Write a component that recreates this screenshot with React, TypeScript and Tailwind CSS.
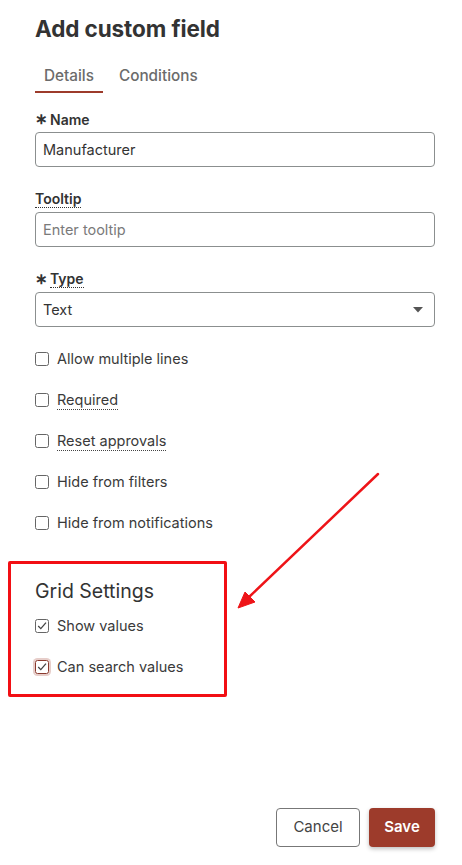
import React from "react";

function Box({ checked, focus }: { checked?: boolean; focus?: boolean }) {
  return (
    <span
      className={
        "relative flex h-[14px] w-[14px] shrink-0 items-center justify-center rounded-[2.5px] border-[1.5px] " +
        (focus
          ? "border-[#8a3a2e] shadow-[0_0_0_2px_rgba(158,58,42,0.25)]"
          : "border-[#666]")
      }
    >
      {checked && (
        <svg width="12" height="12" viewBox="0 0 12 12" className="absolute">
          <path d="M2.2 6 L4.8 8.6 L10 2.6" fill="none" stroke="#444" strokeWidth="1.3" />
        </svg>
      )}
    </span>
  );
}

function Row({ label, dotted, checked, focus }: { label: string; dotted?: boolean; checked?: boolean; focus?: boolean }) {
  return (
    <div className="flex h-[20px] items-center gap-[8px]">
      <Box checked={checked} focus={focus} />
      <span className={"text-[14.5px] leading-[18px] text-[#3a3a3a] " + (dotted ? "border-b border-dotted border-[#444]" : "")}>
        {label}
      </span>
    </div>
  );
}

export default function App() {
  return (
    <div
      className="relative flex h-[865px] w-[462px] flex-col bg-white text-[#333]"
      style={{ fontFamily: "Inter, 'Noto Sans', sans-serif" }}
    >
      <div className="flex flex-col pl-[35px] pr-[27px] pt-[14px]">
        <h1 className="text-[22.5px] font-bold leading-[30px] tracking-[-0.1px] text-[#333]">Add custom field</h1>
        <div className="mt-[18px] flex gap-[8px]">
          <div className="border-b-2 border-[#9d3b2b] px-[9px] pt-[4px] pb-[5px] text-[15.3px] font-medium leading-[20px] text-[#6b6b6b]">
            Details
          </div>
          <div className="px-[8px] pt-[4px] pb-[5px] text-[15.3px] font-medium leading-[20px] text-[#6b6b6b]">
            Conditions
          </div>
        </div>

        <div className="mt-[16px] flex h-[20px] items-center text-[14px] font-semibold text-[#333]">
          <span className="mr-[2px] text-[15px]">∗</span>Name
        </div>
        <div className="mt-[3px] flex h-[35px] items-center rounded-[4px] border border-[#8b8f8f] px-[7px] text-[14.5px] text-[#333]">
          Manufacturer
        </div>

        <div className="mt-[22px] flex h-[20px] items-center text-[14px] font-semibold text-[#333]">
          <span className="border-b border-dotted border-[#333] leading-[17px]">Tooltip</span>
        </div>
        <div className="mt-[3px] flex h-[35px] items-center rounded-[4px] border border-[#8b8f8f] px-[7px] text-[14.5px] text-[#7a7a7a]">
          Enter tooltip
        </div>

        <div className="mt-[22px] flex h-[20px] items-center text-[14px] font-semibold text-[#333]">
          <span className="mr-[2px] text-[15px]">∗</span>
          <span className="border-b border-dotted border-[#333] leading-[17px]">Type</span>
        </div>
        <div className="mt-[3px] flex h-[35px] items-center justify-between rounded-[4px] border border-[#8b8f8f] pl-[7px] pr-[11px] text-[14.5px] text-[#333]">
          <span>Text</span>
          <svg width="10" height="6" viewBox="0 0 10 6">
            <path d="M0 0 L10 0 L5 5.5 Z" fill="#555" />
          </svg>
        </div>

        <div className="mt-[22px] flex flex-col gap-[21px]">
          <Row label="Allow multiple lines" />
          <Row label="Required" dotted />
          <Row label="Reset approvals" dotted />
          <Row label="Hide from filters" />
          <Row label="Hide from notifications" />
        </div>

        <div className="mt-[45px] text-[19.5px] leading-[26px] text-[#333]">Grid Settings</div>
        <div className="mt-[12px] flex flex-col gap-[21px]">
          <Row label="Show values" checked />
          <Row label="Can search values" checked focus />
        </div>
      </div>

      <div className="mt-auto flex justify-end gap-[9px] pb-[18px] pr-[27px]">
        <button className="h-[39px] w-[84px] rounded-[4px] border border-[#777] bg-white text-[15px] text-[#444]">
          Cancel
        </button>
        <button className="h-[39px] w-[66px] rounded-[4px] bg-[#9d3b2b] text-[15px] font-semibold text-white shadow-[0_2px_4px_rgba(0,0,0,0.25)]">
          Save
        </button>
      </div>

      <div className="pointer-events-none absolute left-[8px] top-[561px] h-[136px] w-[219px] rounded-[2px] border-[3px] border-[#f20f14]" />
      <svg className="pointer-events-none absolute left-0 top-0" width="462" height="865">
        <line x1="378" y1="474" x2="248" y2="598" stroke="#ee1418" strokeWidth="2.5" strokeLinecap="round" />
        <path d="M238 608 L245 592 L255 602 Z" fill="#ee1418" stroke="#ee1418" strokeWidth="1" strokeLinejoin="round" />
      </svg>
    </div>
  );
}
